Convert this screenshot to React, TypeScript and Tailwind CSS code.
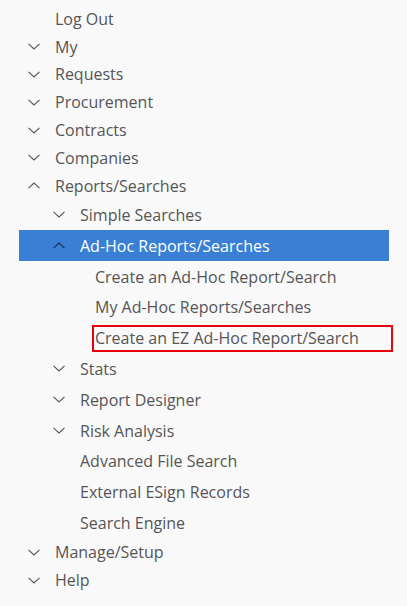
type Item = {
  label: string;
  indent: number; // x of text
  chevron?: "down" | "up";
  tall?: boolean;
  active?: boolean;
  boxed?: boolean;
};

const items: Item[] = [
  { label: "Log Out", indent: 55 },
  { label: "My", indent: 55, chevron: "down" },
  { label: "Requests", indent: 55, chevron: "down" },
  { label: "Procurement", indent: 55, chevron: "down" },
  { label: "Contracts", indent: 55, chevron: "down" },
  { label: "Companies", indent: 55, chevron: "down" },
  { label: "Reports/Searches", indent: 55, chevron: "up" },
  { label: "Simple Searches", indent: 80, chevron: "down", tall: true },
  { label: "Ad-Hoc Reports/Searches", indent: 80, chevron: "up", tall: true, active: true },
  { label: "Create an Ad-Hoc Report/Search", indent: 95, tall: true },
  { label: "My Ad-Hoc Reports/Searches", indent: 95, tall: true },
  { label: "Create an EZ Ad-Hoc Report/Search", indent: 95, tall: true, boxed: true },
  { label: "Stats", indent: 80, chevron: "down", tall: true },
  { label: "Report Designer", indent: 80, chevron: "down", tall: true },
  { label: "Risk Analysis", indent: 80, chevron: "down", tall: true },
  { label: "Advanced File Search", indent: 80, tall: true },
  { label: "External ESign Records", indent: 80, tall: true },
  { label: "Search Engine", indent: 80, tall: true },
  { label: "Manage/Setup", indent: 55, chevron: "down" },
  { label: "Help", indent: 55, chevron: "down" },
];

function Chevron({ dir, className }: { dir: "down" | "up"; className?: string }) {
  return (
    <svg width="12" height="7" viewBox="0 0 12 7" className={className}>
      <polyline
        points={dir === "down" ? "0.5,0.8 6,6 11.5,0.8" : "0.5,6.2 6,1 11.5,6.2"}
        fill="none"
        stroke="currentColor"
        strokeWidth="1.1"
      />
    </svg>
  );
}

function Row({ item }: { item: Item }) {
  const h = item.tall ? "h-[30.8px]" : "h-[27.8px]";

  if (item.active) {
    return (
      <div className={`${h} ml-[19px] w-[370px] bg-[#3a7fd6] flex items-center pl-[34px] text-white`}>
        <Chevron dir={item.chevron!} className="text-[#1c2b44] shrink-0" />
        <span className="ml-[15px]">{item.label}</span>
      </div>
    );
  }

  if (item.boxed) {
    return (
      <div className={`${h} flex items-center`}>
        <div className="ml-[92px] w-[301px] h-[27px] border-2 border-[#e8000b] flex items-center pl-[1px]">
          {item.label}
        </div>
      </div>
    );
  }

  return (
    <div className={`${h} flex items-center`} style={{ paddingLeft: item.chevron ? item.indent - 27 : item.indent }}>
      {item.chevron && <Chevron dir={item.chevron} className="text-[#555] shrink-0" />}
      <span className={item.chevron ? "ml-[15px]" : ""}>{item.label}</span>
    </div>
  );
}

export default function App() {
  return (
    <div className="w-[407px] h-[606px] bg-[#f9f9f9] pt-[5px] text-[16px] text-[#555] font-['Open_Sans',sans-serif] overflow-hidden">
      {items.map((item) => (
        <Row key={item.label} item={item} />
      ))}
    </div>
  );
}
